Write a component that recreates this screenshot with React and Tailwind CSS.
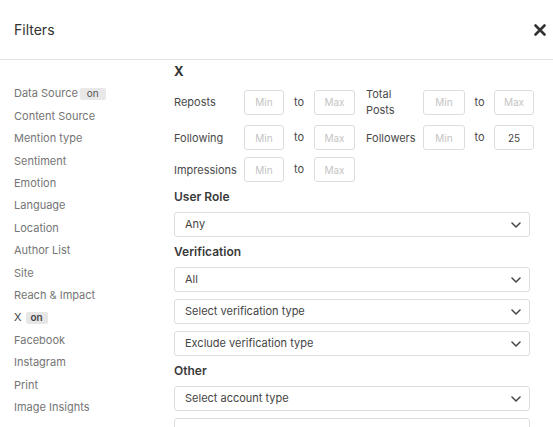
import React from 'react';

const sidebar = [
  { label: 'Data Source', badge: 'on' },
  { label: 'Content Source' },
  { label: 'Mention type' },
  { label: 'Sentiment' },
  { label: 'Emotion' },
  { label: 'Language' },
  { label: 'Location' },
  { label: 'Author List' },
  { label: 'Site' },
  { label: 'Reach & Impact' },
  { label: 'X', badge: 'on', active: true },
  { label: 'Facebook' },
  { label: 'Instagram' },
  { label: 'Print' },
  { label: 'Image Insights' },
];

function NumInput({ placeholder, value, className = 'w-[40px]' }) {
  return (
    <input
      type="text"
      placeholder={placeholder}
      defaultValue={value}
      className={`${className} shrink-0 h-[25px] border border-[#dddddd] rounded-[3px] text-center text-[10px] text-[#444] placeholder-[#c4c4c4] outline-none`}
    />
  );
}

function RangeGroup({ label, labelWidth, max, leftW = 'w-[40px]', toW = 'w-[30px]', rightW = 'w-[41px]' }) {
  return (
    <div className="flex items-center shrink-0">
      <span className={`${labelWidth} shrink-0 text-[11px] leading-[16px] text-[#4a4a4a]`}>{label}</span>
      <NumInput placeholder="Min" className={leftW} />
      <span className={`${toW} shrink-0 text-center text-[11px] text-[#4a4a4a]`}>to</span>
      <NumInput placeholder="Max" value={max} className={rightW} />
    </div>
  );
}

function Select({ text }) {
  return (
    <div className="h-[25px] shrink-0 border border-[#dddddd] rounded-[3px] flex items-center justify-between pl-[10px] pr-[8px] text-[11px] text-[#444]">
      <span>{text}</span>
      <svg width="10" height="6" viewBox="0 0 10 6" fill="none">
        <path d="M1 1l4 4 4-4" stroke="#444" strokeWidth="1.5" strokeLinecap="round" strokeLinejoin="round" />
      </svg>
    </div>
  );
}

function SectionLabel({ children }) {
  return <div className="text-[12px] leading-[16px] font-semibold text-[#3a3a3a]">{children}</div>;
}

export default function App() {
  return (
    <div className="w-[553px] h-[427px] overflow-hidden bg-white font-['Inter',sans-serif]">
      <div className="h-[60px] border-b border-[#e2e2e2] flex items-center justify-between pl-[14px] pr-[7px]">
        <span className="text-[14px] text-[#333]">Filters</span>
        <svg width="12" height="12" viewBox="0 0 12 12">
          <path d="M1.5 1.5l9 9M10.5 1.5l-9 9" stroke="#333" strokeWidth="2.6" strokeLinecap="round" />
        </svg>
      </div>
      <div className="flex">
        <div className="w-[174px] shrink-0 pl-[14px] pt-[22.5px] flex flex-col">
          {sidebar.map((item) => (
            <div key={item.label} className="h-[22.4px] flex items-center text-[11px] text-[#757575]">
              <span className={item.active ? 'text-[#444]' : ''}>{item.label}</span>
              {item.badge && (
                <span
                  className={
                    item.active
                      ? 'ml-[4px] px-[5px] h-[12px] flex items-center rounded-[2px] bg-[#e6e6e6] text-[10px] font-semibold text-[#444]'
                      : 'ml-[2px] px-[7px] h-[12px] flex items-center rounded-[2px] bg-[#e8e8e8] text-[10px] text-[#555]'
                  }
                >
                  {item.badge}
                </span>
              )}
            </div>
          ))}
        </div>
        <div className="flex-1 min-w-0 pr-[23px] pt-[3px] flex flex-col gap-[7px]">
          <div className="text-[13px] leading-[16px] font-bold text-[#333]">X</div>
          <div className="flex items-center">
            <RangeGroup label="Reposts" labelWidth="w-[70px]" />
            <div className="ml-[11px] shrink-0">
              <RangeGroup label="Total Posts" labelWidth="w-[57px]" leftW="w-[42px]" toW="w-[29px]" rightW="w-[40px]" />
            </div>
          </div>
          <div className="flex items-center">
            <RangeGroup label="Following" labelWidth="w-[70px]" />
            <div className="ml-[11px] shrink-0">
              <RangeGroup label="Followers" labelWidth="w-[57px]" max="25" leftW="w-[42px]" toW="w-[29px]" rightW="w-[40px]" />
            </div>
          </div>
          <div className="flex items-center">
            <RangeGroup label="Impressions" labelWidth="w-[70px]" />
          </div>
          <SectionLabel>User Role</SectionLabel>
          <Select text="Any" />
          <SectionLabel>Verification</SectionLabel>
          <Select text="All" />
          <Select text="Select verification type" />
          <Select text="Exclude verification type" />
          <SectionLabel>Other</SectionLabel>
          <Select text="Select account type" />
          <div className="h-[25px] shrink-0 border border-[#dddddd] rounded-[3px]" />
        </div>
      </div>
    </div>
  );
}
